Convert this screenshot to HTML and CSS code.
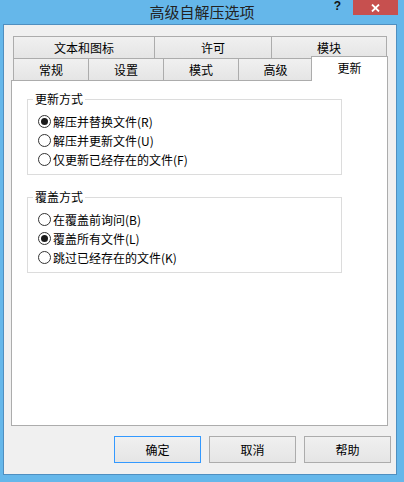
FILE: index.html
```html
<!DOCTYPE html>
<html lang="zh-CN">
<head>
<meta charset="utf-8">
<title>高级自解压选项</title>
<link rel="stylesheet" href="styles.css">
</head>
<body>
<div class="window">
  <div class="titlebar">
    <div class="tb-left"></div>
    <div class="title">高级自解压选项</div>
    <div class="tb-right">
      <span class="help">?</span>
      <span class="close"><svg width="9" height="8" viewBox="0 0 9 8"><path d="M1 0.5 L8 7.5 M8 0.5 L1 7.5" stroke="#fff" stroke-width="1.8" fill="none"/></svg></span>
    </div>
  </div>
  <div class="client">
    <div class="tabs">
      <div class="tabrow row1">
        <div class="tab w1">文本和图标</div>
        <div class="tab w2">许可</div>
        <div class="tab w3">模块</div>
      </div>
      <div class="tabrow row2">
        <div class="tab w4">常规</div>
        <div class="tab w4">设置</div>
        <div class="tab w4">模式</div>
        <div class="tab w5">高级</div>
        <div class="tab sel">更新</div>
      </div>
    </div>
    <div class="panel">
      <div class="group">
        <span class="legend">更新方式</span>
        <div class="radio"><span class="dot on"></span>解压并替换文件(R)</div>
        <div class="radio"><span class="dot"></span>解压并更新文件(U)</div>
        <div class="radio"><span class="dot"></span>仅更新已经存在的文件(F)</div>
      </div>
      <div class="group g2">
        <span class="legend">覆盖方式</span>
        <div class="radio"><span class="dot"></span>在覆盖前询问(B)</div>
        <div class="radio"><span class="dot on"></span>覆盖所有文件(L)</div>
        <div class="radio"><span class="dot"></span>跳过已经存在的文件(K)</div>
      </div>
    </div>
    <div class="buttons">
      <button class="btn default">确定</button>
      <button class="btn">取消</button>
      <button class="btn">帮助</button>
    </div>
  </div>
</div>
</body>
</html>
```
FILE: styles.css
```css
html, body {
  margin: 0;
  padding: 0;
}
body {
  font-family: "Noto Sans CJK SC", "Microsoft YaHei", sans-serif;
  font-size: 12px;
  color: #000;
}
.window {
  width: 404px;
  height: 482px;
  background: #65b7ea;
  display: flex;
  flex-direction: column;
  box-sizing: border-box;
}
.titlebar {
  height: 24px;
  display: grid;
  grid-template-columns: 1fr auto 1fr;
  align-items: start;
}
.title {
  font-size: 15px;
  line-height: 24px;
  color: #222;
}
.tb-right {
  display: flex;
  justify-content: flex-end;
  align-items: flex-start;
  padding-right: 6px;
}
.help {
  font-family: "Liberation Sans", sans-serif;
  font-weight: bold;
  font-size: 12px;
  line-height: 13px;
  color: #111;
  margin-right: 12px;
}
.close {
  width: 45px;
  height: 15px;
  background: #c7504f;
  display: flex;
  align-items: center;
  justify-content: center;
}
.client {
  flex: 1;
  margin: 0 7px 7px 3px;
  border: 1px solid #4f8fc0;
  background: #f0f0f0;
  padding: 11px 5px 0 7px;
  display: flex;
  flex-direction: column;
}
.tabs {
  padding-left: 2px;
  display: flex;
  flex-direction: column;
}
.tabrow {
  display: flex;
  height: 22px;
  align-items: flex-end;
}
.tab {
  box-sizing: border-box;
  height: 22px;
  border: 1px solid #acacac;
  border-bottom: none;
  margin-left: -1px;
  background: linear-gradient(#f0f0f0, #e5e5e5);
  display: flex;
  align-items: center;
  justify-content: center;
  line-height: 1;
  color: #000;
}
.tab:first-child { margin-left: 0; }
.w1 { width: 142px; }
.w2 { width: 118px; }
.w3 { width: 116px; }
.w4 { width: 76px; }
.w5 { width: 75px; }
.tab.sel {
  width: 77px;
  height: 25px;
  margin-left: -2px;
  margin-bottom: -1px;
  background: #fff;
  position: relative;
  z-index: 1;
  padding-bottom: 2px;
}
.panel {
  box-sizing: border-box;
  width: 377px;
  height: 346px;
  background: #fff;
  border: 1px solid #acacac;
  padding: 18px 0 0 15px;
}
.group {
  position: relative;
  box-sizing: border-box;
  width: 315px;
  height: 76px;
  border: 1px solid #dcdcdc;
  padding: 12px 0 0 10px;
}
.g2 { margin-top: 22px; }
.legend {
  position: absolute;
  left: 5px;
  top: -9px;
  padding: 0 2px;
  background: #fff;
  line-height: 16px;
}
.radio {
  height: 19px;
  display: flex;
  align-items: center;
  line-height: 1;
}
.dot {
  box-sizing: border-box;
  width: 13px;
  height: 13px;
  border: 1px solid #333;
  border-radius: 50%;
  background: #fff;
  margin-right: 2px;
  display: flex;
  align-items: center;
  justify-content: center;
}
.dot.on::after {
  content: "";
  width: 7px;
  height: 7px;
  border-radius: 50%;
  background: #1a1a1a;
}
.buttons {
  display: flex;
  justify-content: flex-end;
  gap: 8px;
  margin-top: 10px;
}
.btn {
  box-sizing: border-box;
  width: 87px;
  height: 27px;
  border: 1px solid #acacac;
  background: linear-gradient(#f0f0f0, #e5e5e5);
  font-family: "Noto Sans CJK SC", sans-serif;
  font-size: 12px;
  color: #000;
  padding: 0;
  line-height: 1;
}
.btn.default {
  border-color: #3399ff;
}
```
